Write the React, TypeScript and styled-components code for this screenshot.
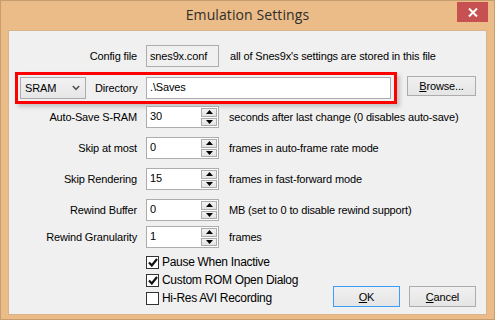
import React from "react";
import styled, { createGlobalStyle } from "styled-components";

const Global = createGlobalStyle`
  html, body { margin: 0; padding: 0; background: #ebbc87; }
  body { font-family: "Liberation Sans", Arial, sans-serif; font-size: 11px; color: #000; letter-spacing: -0.15px; }
  * { box-sizing: border-box; }
`;

const Window = styled.div`
  width: 495px;
  height: 320px;
  background: #ebbc87;
  border: 1px solid #c79e70;
  display: flex;
  flex-direction: column;
  overflow: hidden;
`;

const TitleBar = styled.div`
  height: 29px;
  display: grid;
  grid-template-columns: 1fr auto 1fr;
  align-items: start;
`;

const Title = styled.div`
  grid-column: 2;
  font-family: "Open Sans", "Noto Sans", sans-serif;
  font-size: 14px;
  color: #2e2e2e;
  padding-top: 4px;
  letter-spacing: 0.1px;
`;

const CloseBtn = styled.div`
  grid-column: 3;
  justify-self: end;
  margin-right: 6px;
  margin-top: 1px;
  width: 31px;
  height: 20px;
  background: #c75050;
  display: flex;
  align-items: center;
  justify-content: center;
`;

const Client = styled.div`
  flex: 1;
  margin: 0 7px 4px 7px;
  background: #f0f0f0;
  border: 1px solid #d9b48a;
  padding-top: 14px;
`;

const FieldRow = styled.div<{ $mt?: number }>`
  display: grid;
  grid-template-columns: 128px 73px auto;
  column-gap: 9px;
  align-items: center;
  height: 22px;
  margin-top: ${(p) => p.$mt ?? 0}px;
`;

const Label = styled.div`
  text-align: right;
  white-space: nowrap;
`;

const Desc = styled.div<{ $ml?: number }>`
  white-space: nowrap;
  margin-left: ${(p) => p.$ml ?? 0}px;
`;

const ReadOnlyBox = styled.div`
  height: 22px;
  border: 1px solid #adadad;
  background: #f0f0f0;
  padding: 3px 3px;
  line-height: 14px;
`;

const TextBox = styled.div<{ $w: number }>`
  width: ${(p) => p.$w}px;
  height: 22px;
  border: 1px solid #abadb3;
  background: #fff;
  padding: 2px 3px;
  line-height: 15px;
`;

const DirRow = styled.div`
  display: flex;
  align-items: flex-start;
  margin-top: 5px;
`;

const Highlight = styled.div`
  margin-left: 6px;
  width: 382px;
  height: 32px;
  border: 3px solid #ff0000;
  padding: 2px 3px 2px 2px;
  display: flex;
  align-items: center;
  box-shadow: 3px 3px 4px rgba(0, 0, 0, 0.18);
`;

const Combo = styled.div`
  width: 66px;
  height: 22px;
  border: 1px solid #acacac;
  background: linear-gradient(#f2f2f2, #e6e6e6);
  display: flex;
  align-items: center;
  justify-content: space-between;
  padding: 0 5px 0 4px;
`;

const DirLabel = styled.div`
  margin-left: 9px;
  width: 51px;
`;

const Button = styled.div<{ $w: number; $h: number; $default?: boolean }>`
  width: ${(p) => p.$w}px;
  height: ${(p) => p.$h}px;
  border: 1px solid ${(p) => (p.$default ? "#3c9cfc" : "#acacac")};
  background: linear-gradient(#f0f0f0, #e5e5e5);
  display: flex;
  align-items: center;
  justify-content: center;
  white-space: nowrap;
  u { text-decoration: underline; text-underline-offset: 1px; }
`;

const BrowseWrap = styled.div`
  margin-left: 10px;
  margin-top: 4px;
`;

const SpinBox = styled.div`
  height: 22px;
  border: 1px solid #adadad;
  background: #fff;
  display: flex;
  align-items: stretch;
`;

const SpinValue = styled.div`
  flex: 1;
  padding: 2px 3px;
  line-height: 15px;
`;

const SpinButtons = styled.div`
  width: 17px;
  padding: 1px 1px 1px 0;
  display: flex;
  flex-direction: column;
  gap: 1px;
`;

const SpinBtn = styled.div`
  flex: 1;
  border: 1px solid #acacac;
  background: linear-gradient(#f2f2f2, #e3e3e3);
  display: flex;
  align-items: center;
  justify-content: center;
`;

const Bottom = styled.div`
  display: grid;
  grid-template-columns: 324px auto;
  margin-top: 5px;
`;

const CheckList = styled.div`
  padding-left: 137px;
  display: flex;
  flex-direction: column;
`;

const CheckRow = styled.div`
  height: 18px;
  display: flex;
  align-items: center;
  gap: 3px;
  white-space: nowrap;
  font-size: 12px;
  letter-spacing: -0.3px;
`;

const CheckBox = styled.div`
  width: 13px;
  height: 13px;
  border: 1px solid #333;
  background: #fff;
  display: flex;
  align-items: center;
  justify-content: center;
`;

const Buttons = styled.div`
  display: flex;
  gap: 9px;
  align-items: flex-start;
  padding-top: 33px;
`;

const Up = () => (
  <svg width="7" height="4" viewBox="0 0 7 4"><path d="M3.5 0 L7 4 L0 4 Z" fill="#000" /></svg>
);
const Down = () => (
  <svg width="7" height="4" viewBox="0 0 7 4"><path d="M0 0 L7 0 L3.5 4 Z" fill="#000" /></svg>
);

const Spin: React.FC<{ v: string }> = ({ v }) => (
  <SpinBox>
    <SpinValue>{v}</SpinValue>
    <SpinButtons>
      <SpinBtn><Up /></SpinBtn>
      <SpinBtn><Down /></SpinBtn>
    </SpinButtons>
  </SpinBox>
);

const Check: React.FC<{ on?: boolean; label: string }> = ({ on, label }) => (
  <CheckRow>
    <CheckBox>
      {on && (
        <svg width="10" height="9" viewBox="0 0 10 9">
          <path d="M1 4.5 L3.8 7.5 L9 1" stroke="#111" strokeWidth="2.2" fill="none" />
        </svg>
      )}
    </CheckBox>
    <span>{label}</span>
  </CheckRow>
);

const spins = [
  { label: "Auto-Save S-RAM", v: "30", desc: "seconds after last change (0 disables auto-save)", mt: 2 },
  { label: "Skip at most", v: "0", desc: "frames in auto-frame rate mode", mt: 9 },
  { label: "Skip Rendering", v: "15", desc: "frames in fast-forward mode", mt: 9 },
  { label: "Rewind Buffer", v: "0", desc: "MB (set to 0 to disable rewind support)", mt: 9 },
  { label: "Rewind Granularity", v: "1", desc: "frames", mt: 5 },
];

export default function App() {
  return (
    <>
      <Global />
      <Window>
        <TitleBar>
          <Title>Emulation Settings</Title>
          <CloseBtn>
            <svg width="10" height="9" viewBox="0 0 10 9">
              <path d="M1 0.5 L9 8.5 M9 0.5 L1 8.5" stroke="#fff" strokeWidth="2" />
            </svg>
          </CloseBtn>
        </TitleBar>
        <Client>
          <FieldRow>
            <Label>Config file</Label>
            <ReadOnlyBox>snes9x.conf</ReadOnlyBox>
            <Desc $ml={2}>all of Snes9x's settings are stored in this file</Desc>
          </FieldRow>
          <DirRow>
            <Highlight>
              <Combo>
                <span>SRAM</span>
                <svg width="8" height="6" viewBox="0 0 8 6">
                  <path d="M0.8 1 L4 4.3 L7.2 1" stroke="#555" strokeWidth="1.6" fill="none" />
                </svg>
              </Combo>
              <DirLabel>Directory</DirLabel>
              <TextBox $w={245}>.\Saves</TextBox>
            </Highlight>
            <BrowseWrap>
              <Button $w={69} $h={20}>
                <span><u>B</u>rowse...</span>
              </Button>
            </BrowseWrap>
          </DirRow>
          {spins.map((s) => (
            <FieldRow key={s.label} $mt={s.mt}>
              <Label>{s.label}</Label>
              <Spin v={s.v} />
              <Desc $ml={1}>{s.desc}</Desc>
            </FieldRow>
          ))}
          <Bottom>
            <CheckList>
              <Check on label="Pause When Inactive" />
              <Check on label="Custom ROM Open Dialog" />
              <Check label="Hi-Res AVI Recording" />
            </CheckList>
            <Buttons>
              <Button $w={67} $h={21} $default>
                <span><u>O</u>K</span>
              </Button>
              <Button $w={67} $h={21}>
                <span><u>C</u>ancel</span>
              </Button>
            </Buttons>
          </Bottom>
        </Client>
      </Window>
    </>
  );
}
